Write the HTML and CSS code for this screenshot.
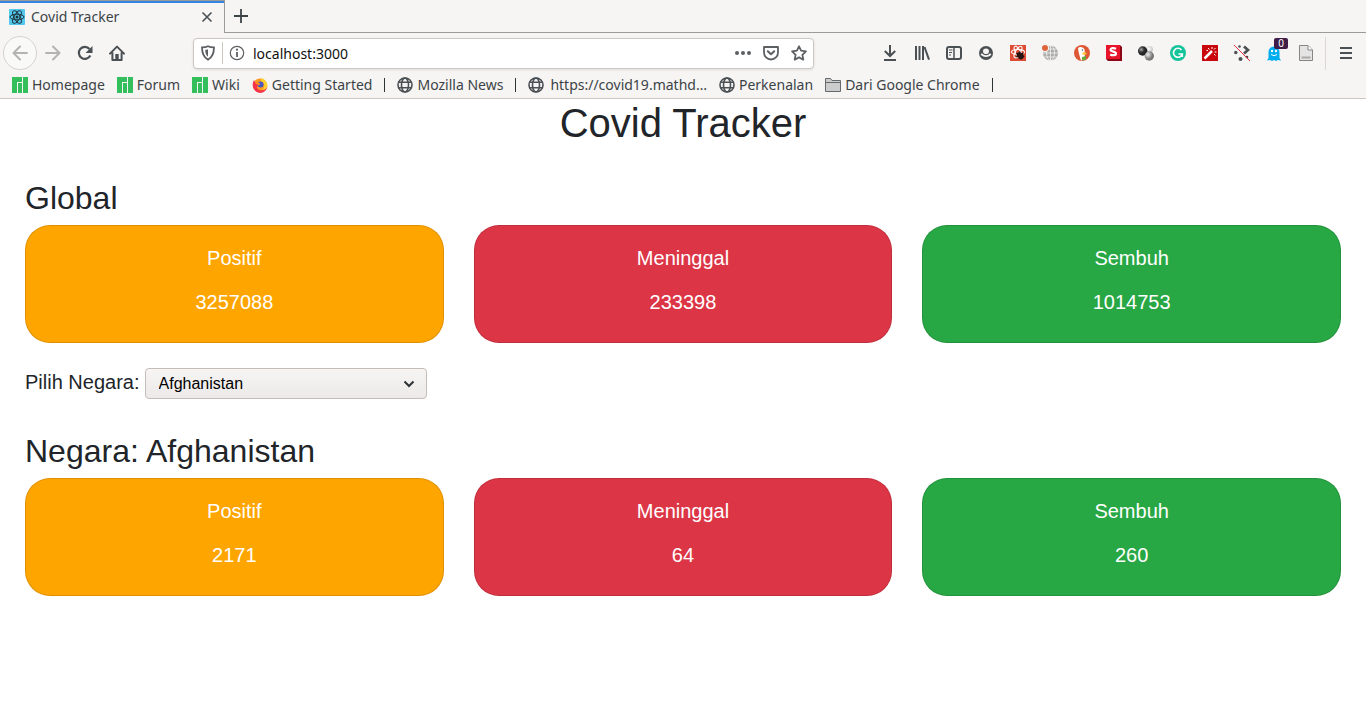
FILE: index.html
```
<!DOCTYPE html>
<html lang="id">
<head>
<meta charset="utf-8">
<title>Covid Tracker</title>
<link rel="stylesheet" href="styles.css">
</head>
<body>
<svg class="defs" aria-hidden="true">
  <symbol id="manjaro" viewBox="0 0 16 16"><path fill="#35bf5c" d="M0 0h10v5H5v11H0zM6 6h4v10H6zM11 0h5v16h-5z"/></symbol>
  <symbol id="globe" viewBox="0 0 16 16"><g fill="none" stroke="#4a5054" stroke-width="1.6"><circle cx="8" cy="8" r="7"/><ellipse cx="8" cy="8" rx="3.5" ry="7"/><path d="M1.5 5.3h13M1.5 10.7h13" stroke-width="1.4"/></g></symbol>
</svg>

<header class="browser">
  <div class="tabs">
    <div class="tab">
      <svg class="icon" viewBox="0 0 16 16"><rect width="16" height="16" rx="1" fill="#53c8ee"/><g fill="none" stroke="#20363f" stroke-width="1"><ellipse cx="8" cy="8" rx="7" ry="2.8"/><ellipse cx="8" cy="8" rx="7" ry="2.8" transform="rotate(60 8 8)"/><ellipse cx="8" cy="8" rx="7" ry="2.8" transform="rotate(120 8 8)"/></g><circle cx="8" cy="8" r="1.5" fill="#20363f"/></svg>
      <span class="tab-title">Covid Tracker</span>
      <button class="tool" aria-label="Tutup tab"><svg class="icon" viewBox="0 0 16 16"><path d="M3.5 3.5l9 9m0-9l-9 9" stroke="#4a5054" stroke-width="1.6"/></svg></button>
    </div>
    <div class="tab-rest"><button class="tool" aria-label="Tab baru"><svg class="icon" viewBox="0 0 16 16"><path d="M8 1v14M1 8h14" stroke="#3c4347" stroke-width="1.8"/></svg></button></div>
  </div>

  <nav class="toolbar">
    <div class="nav-buttons">
      <button class="back" aria-label="Kembali"><svg class="icon" viewBox="0 0 16 16"><path d="M15 8H1.5M8 1.5L1.5 8 8 14.5" fill="none" stroke="#b3b3b2" stroke-width="2" stroke-linejoin="round" stroke-linecap="round"/></svg></button>
      <button class="tool" aria-label="Maju"><svg class="icon" viewBox="0 0 16 16"><path d="M1 8h13.5M8 1.5L14.5 8 8 14.5" fill="none" stroke="#b3b3b2" stroke-width="2" stroke-linejoin="round" stroke-linecap="round"/></svg></button>
      <button class="tool" aria-label="Muat ulang"><svg class="icon" viewBox="0 0 16 16"><path d="M13.3 10.5A6 6 0 1 1 12.5 4" fill="none" stroke="#4a5054" stroke-width="2.2"/><path d="M15.5 1v7h-7z" fill="#4a5054"/></svg></button>
      <button class="tool" aria-label="Beranda"><svg class="icon" viewBox="0 0 16 16"><path d="M1 8.6L8 1.600l7 7M3.400 8v7h9.200V8" fill="none" stroke="#4a5054" stroke-width="2" stroke-linejoin="round" stroke-linecap="round"/><path d="M6.300 9h3.400v6H6.300z" fill="#4a5054"/></svg></button>
    </div>
    <div class="address">
      <svg class="icon" viewBox="0 0 16 16"><path d="M8 1.200c2 .9 4 1.100 6 1.100 0 6-1.200 9.800-6 12.500C3.200 12.100 2 8.300 2 2.300 4 2.300 6 2.100 8 1.200z" fill="none" stroke="#5d6063" stroke-width="1.800"/><path d="M8 4.200v7.600C5.800 10 5.300 7.800 5.200 4.800 6.200 4.800 7 4.600 8 4.200z" fill="#5d6063"/></svg>
      <span class="address-divider"></span>
      <svg class="icon" viewBox="0 0 16 16"><circle cx="8" cy="8" r="6.700" fill="none" stroke="#5d6063" stroke-width="1.200"/><path d="M8 7v5" stroke="#5d6063" stroke-width="1.800"/><circle cx="8" cy="4.700" r="1.100" fill="#5d6063"/></svg>
      <input class="url" type="text" value="localhost:3000" aria-label="Alamat">
      <button class="tool" aria-label="Tindakan halaman"><svg class="icon" viewBox="0 0 16 16"><g fill="#5d6063"><circle cx="2" cy="8" r="2"/><circle cx="8" cy="8" r="2"/><circle cx="14" cy="8" r="2"/></g></svg></button>
      <button class="tool" aria-label="Simpan ke Pocket"><svg class="icon" viewBox="0 0 16 16"><path d="M1 2h14v5.500a7 7 0 0 1-14 0z" fill="none" stroke="#5d6063" stroke-width="1.800" stroke-linejoin="round"/><path d="M4.800 6.200L8 9.300l3.200-3.100" fill="none" stroke="#5d6063" stroke-width="2" stroke-linecap="round" stroke-linejoin="round"/></svg></button>
      <button class="tool" aria-label="Markahi"><svg class="icon" viewBox="0 0 16 16"><path d="M8 1.300l2.100 4.400 4.800.7-3.500 3.400.9 4.900L8 12.400l-4.300 2.300.9-4.900L1.100 6.400l4.800-.7z" fill="none" stroke="#5d6063" stroke-width="1.800" stroke-linejoin="round"/></svg></button>
    </div>
    <div class="extensions">
      <button class="tool" aria-label="Unduhan"><svg class="icon" viewBox="0 0 16 16"><path d="M8 0v10.500M2.800 6L8 11l5.200-5M2 15h12" fill="none" stroke="#4a5054" stroke-width="2"/></svg></button>
      <button class="tool" aria-label="Pustaka"><svg class="icon" viewBox="0 0 16 16"><path d="M2 1v14M5.500 1v14M9 1v14M10.500 2l4.500 12.700" fill="none" stroke="#4a5054" stroke-width="2"/></svg></button>
      <button class="tool" aria-label="Bilah samping"><svg class="icon" viewBox="0 0 16 16"><rect x="1" y="2" width="14" height="12" rx="2" fill="none" stroke="#4a5054" stroke-width="2"/><path d="M8 2v12" stroke="#4a5054" stroke-width="1.500"/><path d="M3 5h3.500M3 7.500h3M3 10h2" stroke="#4a5054"/></svg></button>
      <button class="tool" aria-label="Akun"><svg class="icon" viewBox="0 0 16 16"><circle cx="8" cy="8" r="7" fill="#4a5054"/><ellipse cx="8" cy="6.200" rx="3" ry="2.800" fill="#f6f5f4"/><path d="M3.300 8.800c2 3.200 7.400 3.200 9.400 0" fill="none" stroke="#f6f5f4" stroke-width="1.700"/></svg></button>
      <button class="tool" aria-label="React"><svg class="icon" viewBox="0 0 16 16"><rect width="16" height="16" fill="#dd4b35"/><g fill="none" stroke="#fff" stroke-width="1.100"><ellipse cx="8" cy="7" rx="6.500" ry="2.500"/><ellipse cx="8" cy="7" rx="6.500" ry="2.500" transform="rotate(60 8 7)"/><ellipse cx="8" cy="7" rx="6.500" ry="2.500" transform="rotate(120 8 7)"/></g><path d="M6 8l2.500-.5L10 6l1 2 3-.5-1 2 1.500 2-2.500 3-3-.5-1-2-2.500.5 1.500-2z" fill="#26120f"/></svg></button>
      <button class="tool" aria-label="Jaringan"><svg class="icon" viewBox="0 0 16 16"><circle cx="8.500" cy="8" r="7.500" fill="#aaa"/><path d="M8.500 0v16M1 8h15M2.500 12h12M5 4h10" stroke="#f6f5f4" stroke-width=".8"/><ellipse cx="8.500" cy="8" rx="4" ry="7.500" fill="none" stroke="#f6f5f4" stroke-width=".8"/><circle cx="3" cy="3" r="4" fill="#f6f5f4"/><circle cx="3" cy="3" r="3" fill="#e0653c"/></svg></button>
      <button class="tool" aria-label="DuckDuckGo"><svg class="icon" viewBox="0 0 16 16"><circle cx="8" cy="8" r="8" fill="#de5833"/><path d="M4 3.500C5 1.800 7.500 1.700 9 2.800c2 1.300 2 3 1.500 5l.5 6.500-4 1.200C6 12 5 9 4.500 6.500z" fill="#fff"/><path d="M8.500 7.300l4 .5v1.500l-4 .5z" fill="#fc3"/><path d="M8 12l4-1v3.500L8 15.500z" fill="#66ad3f"/><circle cx="8.500" cy="5" r=".7" fill="#2d4f8e"/></svg></button>
      <button class="tool" aria-label="S"><svg class="icon" viewBox="0 0 16 16"><path d="M0 0h14l2 2v14H2l-2-2z" fill="#8b0716"/><path d="M0 0h14v14H0z" fill="#e8142b"/><path d="M10 3.700C7.500 2.700 4.500 2.900 4.500 4.800c0 2.300 5.500 1.200 5.500 3.600 0 2-3.200 2.200-5.800 1.200" fill="none" stroke="#fff" stroke-width="2.200"/></svg></button>
      <button class="tool" aria-label="Bola"><svg class="icon" viewBox="0 0 16 16"><defs><radialGradient id="dark-ball" cx=".35" cy=".35"><stop stop-color="#aaa"/><stop offset=".6" stop-color="#333"/><stop offset="1" stop-color="#222"/></radialGradient><radialGradient id="light-ball" cx=".4" cy=".4"><stop stop-color="#fff"/><stop offset="1" stop-color="#ccc"/></radialGradient><radialGradient id="gray-ball" cx=".35" cy=".35"><stop stop-color="#eee"/><stop offset="1" stop-color="#777"/></radialGradient></defs><circle cx="11.500" cy="4.500" r="3.500" fill="url(#light-ball)"/><circle cx="4.700" cy="6" r="4.700" fill="url(#dark-ball)"/><circle cx="11.300" cy="11" r="4.700" fill="url(#gray-ball)"/></svg></button>
      <button class="tool" aria-label="Grammarly"><svg class="icon" viewBox="0 0 16 16"><circle cx="8" cy="8" r="8" fill="#15c39a"/><path d="M11.500 5A4.500 4.500 0 1 0 12.300 9H8.500M12.300 9v3" fill="none" stroke="#fff" stroke-width="1.600"/></svg></button>
      <button class="tool" aria-label="Tongkat ajaib"><svg class="icon" viewBox="0 0 16 16"><rect width="16" height="16" fill="#c9080d"/><path d="M2.500 13.500L10 6" stroke="#fff" stroke-width="2.500"/><path d="M10 2v2M13.500 3l-1.500 1.500M12.500 7h2M6 3l1.500 1.500M12 9l1.500 1.500M4.500 5.500h1.500" stroke="#fff"/></svg></button>
      <button class="tool" aria-label="Pemblokir"><svg class="icon" viewBox="0 0 16 16"><g fill="#4a5054"><circle cx="5.500" cy="1.500" r="1.300"/><circle cx="1.800" cy="7.500" r="1.700"/><circle cx="6.500" cy="14" r="2"/><circle cx="13" cy="12" r="1.300"/></g><path d="M10 1.500L14 5l-4 3.500" fill="none" stroke="#4a5054" stroke-width="2.800"/><path d="M0 0l16 16" stroke="#e22d3f" stroke-width="1"/></svg></button>
      <button class="tool" aria-label="Ghostery"><svg class="icon" viewBox="0 0 16 16"><path d="M2.500 7a5.500 5.500 0 0 1 11 0v6l1.500 2.500-3-.5-2 1-2-1-2 1-2-1-3 .5 1.500-2.500z" fill="#00aef0"/><circle cx="6" cy="6" r="1.200" fill="#fff"/><circle cx="10" cy="6" r="1.200" fill="#fff"/><path d="M5 9.500q3 2.500 6 0" fill="none" stroke="#fff"/></svg><span class="badge">0</span></button>
      <button class="tool" aria-label="Catatan"><svg class="icon" viewBox="0 0 16 16"><path d="M1.500.5h8.500l4.500 4.500v10.500h-13z" fill="#e4e4e4" stroke="#858585"/><path d="M10 .5V5h4.500" fill="#fff" stroke="#858585"/><path d="M3.500 11.500h9v2h-9z" fill="#aaa"/></svg></button>
      <span class="menu-divider"></span>
      <button class="tool" aria-label="Menu"><svg class="icon" viewBox="0 0 16 16"><path d="M2 3h12M2 8h12M2 13h12" stroke="#4a5054" stroke-width="2"/></svg></button>
    </div>
  </nav>

  <nav class="bookmarks">
    <a href="#"><svg class="icon"><use href="#manjaro"/></svg>Homepage</a>
    <a href="#"><svg class="icon"><use href="#manjaro"/></svg>Forum</a>
    <a href="#"><svg class="icon"><use href="#manjaro"/></svg>Wiki</a>
    <a href="#"><svg class="icon" viewBox="0 0 16 16"><circle cx="8" cy="8.500" r="7" fill="#ff9a1f"/><path d="M2 3C-1 8 1 15 8 16c4 0 7-3 7.500-7-2 4-5 5-8 4-3-1-3-4-1-5L3.500 6z" fill="#f5344b"/><path d="M9 1c4 1 6.500 4 6.500 8-1 3-3 4-5 4 3-3 2-7-1.500-9z" fill="#ffd02e"/><circle cx="8.500" cy="7.500" r="3" fill="#4757c9"/><path d="M3.500 6c2-1 4 0 5 1l-2 1.500z" fill="#ff8b1c"/></svg>Getting Started</a>
    <span class="separator"></span>
    <a href="#"><svg class="icon"><use href="#globe"/></svg>Mozilla News</a>
    <span class="separator"></span>
    <a class="wide" href="#"><svg class="icon"><use href="#globe"/></svg>https://covid19.mathd…</a>
    <a href="#"><svg class="icon"><use href="#globe"/></svg>Perkenalan</a>
    <a href="#"><svg class="icon" viewBox="0 0 16 16"><path d="M.5 14.500v-13h5l1.500 2h8.500v11z" fill="#ccc" stroke="#65696b"/><path d="M.5 5.500h15" stroke="#65696b"/></svg>Dari Google Chrome</a>
    <span class="separator"></span>
  </nav>
</header>

<main class="page">
  <h1>Covid Tracker</h1>
  <section>
    <h2>Global</h2>
    <div class="cards">
      <article class="card positive"><h3>Positif</h3><p>3257088</p></article>
      <article class="card deaths"><h3>Meninggal</h3><p>233398</p></article>
      <article class="card recovered"><h3>Sembuh</h3><p>1014753</p></article>
    </div>
  </section>
  <div class="picker">
    <label for="country">Pilih Negara:</label>
    <div class="select-box">
      <select id="country"><option>Afghanistan</option></select>
      <svg class="chevron" viewBox="0 0 12 12"><path d="M1.500 3.500L6 8l4.500-4.500" fill="none" stroke="#2e3436" stroke-width="2"/></svg>
    </div>
  </div>
  <section>
    <h2>Negara: Afghanistan</h2>
    <div class="cards">
      <article class="card positive"><h3>Positif</h3><p>2171</p></article>
      <article class="card deaths"><h3>Meninggal</h3><p>64</p></article>
      <article class="card recovered"><h3>Sembuh</h3><p>260</p></article>
    </div>
  </section>
</main>
</body>
</html>
```

FILE: styles.css
```
* { box-sizing: border-box; }
body { margin: 0; background: #fff; color: #212529; font-family: "Liberation Sans", Arial, sans-serif; }
button { margin: 0; padding: 0; border: 0; background: none; font: inherit; }
.defs { position: absolute; width: 0; height: 0; }
.icon { display: block; flex: none; width: 16px; height: 16px; }
.tool { display: flex; flex: none; position: relative; }

.browser { background: #f6f5f4; border-bottom: 1px solid #cdc7c2; color: #3c4347; font-family: "Noto Sans", sans-serif; font-size: 14px; }
.tabs { display: flex; height: 33px; }
.tab { display: flex; align-items: center; gap: 6px; width: 225px; padding: 0 9px 1px; border-top: 1px solid #9b9b99; border-right: 1px solid #9b9b99; box-shadow: inset 0 2px #3584e4; }
.tab-title { flex: 1; }
.tab-rest { flex: 1; display: flex; align-items: center; padding-left: 8px; border-bottom: 1px solid #9b9b99; }

.toolbar { display: flex; align-items: center; height: 40px; padding: 0 12px 0 3px; }
.nav-buttons { display: flex; align-items: center; gap: 16px; width: 190px; }
.back { display: flex; align-items: center; justify-content: center; width: 34px; height: 34px; margin-right: -8px; border: 1px solid #d5d2cf; border-radius: 50%; background: #f9f9f8; }
.address { display: flex; align-items: center; gap: 12px; flex: 0 1 621px; height: 31px; padding: 0 6px; border: 1px solid #cdc7c2; border-radius: 4px; background: #fff; box-shadow: 0 1px 3px #0000001a; }
.address-divider { width: 1px; height: 22px; margin: 0 -6px; background: #cdc7c2; }
.url { flex: 1; min-width: 0; height: 24px; margin-left: -4px; padding: 0; border: 0; outline: 0; background: none; color: #101010; font: 14px "Noto Sans", sans-serif; }
.extensions { display: flex; align-items: center; gap: 16px; margin-left: auto; }
.menu-divider { width: 1px; height: 33px; margin: 0 -4px 0 -5px; background: #dad7d4; }
.badge { position: absolute; left: 8px; top: -7px; width: 14px; border-radius: 2px; background: #3f1d47; color: #fff; font-size: 10px; line-height: 11px; text-align: center; }

.bookmarks { display: flex; align-items: center; gap: 12px; height: 25px; padding: 0 0 2px 12px; }
.bookmarks a { display: flex; align-items: center; gap: 4px; color: inherit; text-decoration: none; white-space: nowrap; }
.bookmarks .wide { gap: 6px; }
.separator { width: 1px; height: 14px; background: #2e3436; }

.page { padding: 0 25px; }
h1, h2, h3, p { margin: 0; font-weight: 400; }
h1 { font-size: 40px; line-height: 48px; text-align: center; margin-bottom: 32px; }
h2 { font-size: 32px; line-height: 38px; margin-bottom: 8px; }
.cards { display: grid; grid-template-columns: repeat(3, 1fr); gap: 30px; }
.card { padding: 20px 20px 28px; border: 1px solid #00000020; border-radius: 25px; color: #fff; font-size: 20px; line-height: 24px; text-align: center; }
.card h3 { margin-bottom: 20px; font-size: 20px; }
.positive { background-color: #ffa500; }
.deaths { background-color: #dc3545; }
.recovered { background-color: #28a745; }
.picker { display: flex; align-items: baseline; gap: 5px; margin: 25px 0 33px; font-size: 20px; line-height: 24px; }
.select-box { display: grid; align-items: center; width: 282px; }
.select-box > * { grid-area: 1 / 1; }
select { appearance: none; width: 100%; height: 31px; padding: 0 13px; border: 1px solid #c4bdb7; border-radius: 4px; background: linear-gradient(#f6f5f4, #eceae8); color: #000; font: 16px "Liberation Sans", Arial, sans-serif; }
.chevron { justify-self: end; width: 12px; height: 12px; margin-right: 12px; pointer-events: none; }
```
